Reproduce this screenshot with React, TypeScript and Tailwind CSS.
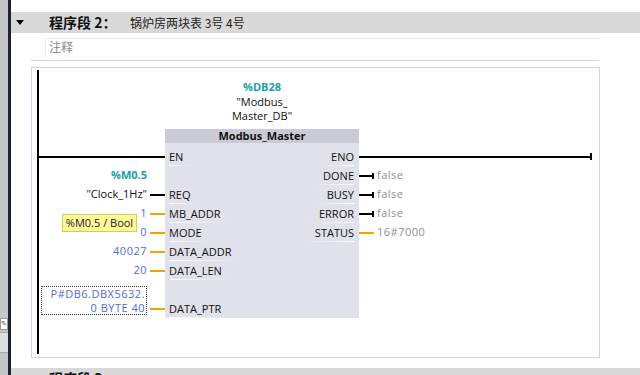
const leftPins = ["EN", "", "REQ", "MB_ADDR", "MODE", "DATA_ADDR", "DATA_LEN", "", "DATA_PTR"];
const rightPins = ["ENO", "DONE", "BUSY", "ERROR", "STATUS", "", "", "", ""];

function PinLeft({ name }: { name: string }) {
  if (!name) return <span />;
  return (
    <div className="flex flex-col pt-[3px]">
      <span className="leading-[14px] pr-[8px]">{name}</span>
      <div className="mt-px h-px bg-linear-to-r from-white to-transparent" />
    </div>
  );
}

function PinRight({ name }: { name: string }) {
  if (!name) return <span />;
  return (
    <div className="flex flex-col items-end pt-[3px]">
      <span className="leading-[14px] pl-[10px]">{name}</span>
      <div className="mt-px h-px w-full bg-linear-to-l from-white to-transparent" />
    </div>
  );
}

function Header({ title, text }: { title: string; text?: string }) {
  return (
    <div className="h-[21px] shrink-0 bg-[#d9d9d9] flex items-center pl-[5px] font-['Noto_Sans_CJK_SC',sans-serif]">
      <div className="w-0 h-0 border-l-[4.5px] border-r-[4.5px] border-t-[5px] border-l-transparent border-r-transparent border-t-black" />
      <span className="ml-[25px] w-[81px] text-[14px] font-bold text-[#111] leading-[21px]">{title}</span>
      {text && <span className="text-[12px] text-[#222] leading-[21px]">{text}</span>}
    </div>
  );
}

function InputValue({ value }: { value: string }) {
  return (
    <div className="h-[19px] flex items-center justify-end gap-[3px]">
      <span className="text-[#4f6bd8] tracking-[0.5px]">{value}</span>
      <div className="h-[2px] w-[15px] bg-[#f5a300]" />
    </div>
  );
}

function BoolOut() {
  return (
    <div className="h-[19px] flex items-center">
      <div className="h-[2px] w-[13px] bg-black" />
      <div className="h-[6px] w-[2px] bg-black" />
      <span className="ml-[3px] text-[#8e8e96] tracking-[0.5px]">false</span>
    </div>
  );
}

export default function App() {
  return (
    <div className="w-[640px] h-[375px] bg-white flex overflow-hidden font-['Open_Sans',sans-serif] text-[11px] text-[#111]">
      <div className="w-[8px] shrink-0 bg-[#c6c6c6] flex flex-col pt-[318px]">
        <div className="h-[12px] shrink-0 bg-white border border-[#999] text-[7px] leading-[10px] text-[#444]">✎</div>
        <div className="mt-[2px] h-[21px] shrink-0 bg-[#dedede] border-t border-b border-[#aaa]" />
      </div>
      <div className="w-[3px] shrink-0 bg-[#1d2331]" />

      <div className="flex-1 pt-[12px]">
        <Header title="程序段 2：" text="锅炉房两块表 3号 4号" />

        <div className="mt-[5px] ml-[34px] w-[555px] h-[20px] border-t border-l border-[#ececec] pl-[3px] font-['Noto_Sans_CJK_SC',sans-serif] text-[12px] leading-[16px] text-[#8a8a8a]">
          注释
        </div>
        <div className="mt-[2px] ml-[20px] w-[568px] h-px bg-[#d6d2e6]" />

        <div className="mt-[6px] ml-[20px] w-[569px] h-[291px] border border-[#d6d2e6] flex pl-[5px] pt-[2px]">
          <div className="w-[2px] h-[284px] bg-black" />

          <div className="flex-1 flex flex-col">
            <div className="h-[59px] shrink-0 pl-[126px]">
              <div className="w-[194px] pt-[10px] flex flex-col items-center leading-[14.5px]">
                <span className="font-bold text-[#18a0a8]">%DB28</span>
                <span>"Modbus_</span>
                <span>Master_DB"</span>
              </div>
            </div>

            <div className="flex">
              <div className="relative w-[126px] pt-[18px] flex flex-col">
                <div className="h-[19px] flex items-center">
                  <div className="h-[2px] w-full bg-black" />
                </div>
                <div className="h-[19px] flex items-center justify-end pr-[18px] font-bold text-[#18a0a8]">%M0.5</div>
                <div className="h-[19px] flex items-center justify-end gap-[3px]">
                  <span>"Clock_1Hz"</span>
                  <div className="h-[2px] w-[15px] bg-black" />
                </div>
                <InputValue value="1" />
                <InputValue value="0" />
                <InputValue value="40027" />
                <InputValue value="20" />
                <div className="h-[38px] flex justify-end gap-[3px] pt-[6px]">
                  <div className="w-[106px] h-[29px] border border-dotted border-[#333] flex flex-col items-end pr-[1px] leading-[13.5px] text-[#4f6bd8] tracking-[0.5px]">
                    <span>P#DB6.DBX5632.</span>
                    <span>0 BYTE 40</span>
                  </div>
                  <div className="self-end mb-[8px] h-[2px] w-[15px] bg-[#f5a300]" />
                </div>

                <div className="absolute left-[23px] top-[85px] w-[75px] h-[18px] bg-[#fff99c] border border-[#d9cc4a] flex items-center justify-center text-[#222]">
                  %M0.5 / Bool
                </div>
              </div>

              <div className="w-[194px] flex flex-col">
                <div className="h-[14px] bg-[#cacbd7] text-center font-bold leading-[14px]">Modbus_Master</div>
                <div className="bg-[#e0e1ea] pt-[4px] flex flex-col">
                  {leftPins.map((l, i) => (
                    <div key={i} className="h-[19px] flex justify-between pl-[4px] pr-[5px]">
                      <PinLeft name={l} />
                      <PinRight name={rightPins[i]} />
                    </div>
                  ))}
                </div>
              </div>

              <div className="flex-1 pt-[18px] flex flex-col">
                <div className="h-[19px] flex items-center">
                  <div className="h-[2px] w-[231px] bg-black" />
                  <div className="h-[7px] w-[2px] bg-black" />
                </div>
                <BoolOut />
                <BoolOut />
                <BoolOut />
                <div className="h-[19px] flex items-center">
                  <div className="h-[2px] w-[15px] bg-[#f5a300]" />
                  <span className="ml-[3px] text-[#8e8e96] tracking-[0.5px]">16#7000</span>
                </div>
              </div>
            </div>
          </div>
        </div>

        <div className="mt-[10px]">
          <Header title="程序段 3：" />
        </div>
      </div>
    </div>
  );
}
